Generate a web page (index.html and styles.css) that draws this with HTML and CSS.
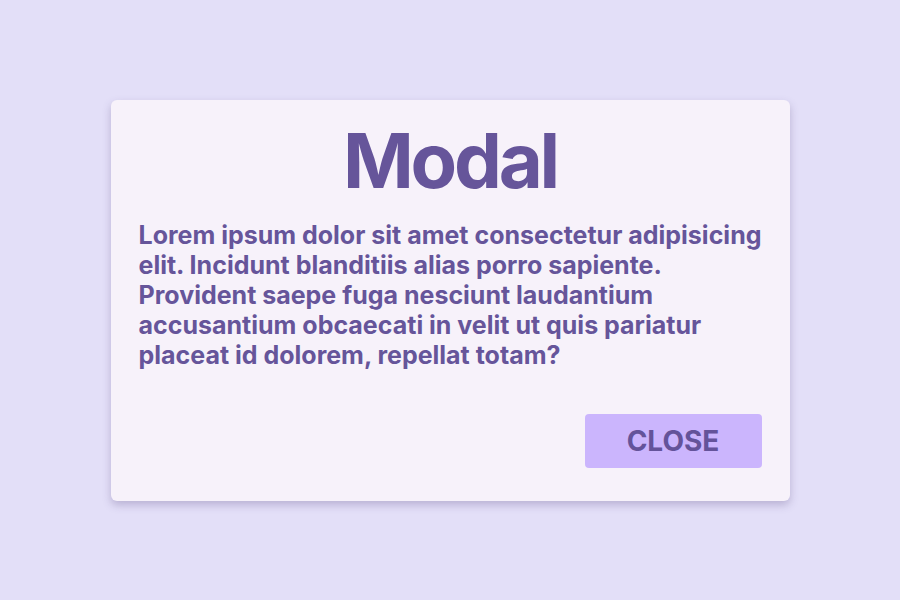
FILE: index.html
```html
<!DOCTYPE html>
<html lang="en">
<head>
<meta charset="utf-8">
<title>Modal</title>
<link rel="stylesheet" href="styles.css">
</head>
<body>
<main class="page">
  <section class="modal">
    <h1 class="modal-title">Modal</h1>
    <p class="modal-text">Lorem ipsum dolor sit amet consectetur adipisicing elit. Incidunt blanditiis alias porro sapiente. Provident saepe fuga nesciunt laudantium accusantium obcaecati in velit ut quis pariatur placeat id dolorem, repellat totam?</p>
    <div class="modal-actions">
      <button class="btn-close" type="button">CLOSE</button>
    </div>
  </section>
</main>
</body>
</html>
```
FILE: styles.css
```css
* { box-sizing: border-box; }
html, body {
  margin: 0;
  padding: 0;
  height: 100%;
}
body {
  background: #e3dff8;
  font-family: "Inter", "Liberation Sans", sans-serif;
  color: #66559a;
}
.page {
  height: 100%;
  display: flex;
  align-items: center;
  justify-content: center;
}
.modal {
  width: 679px;
  background: #f7f2fa;
  border-radius: 6px;
  padding: 14px 28px 33px;
  box-shadow: 0 4px 8px rgba(80, 60, 120, 0.28);
}
.modal-title {
  margin: 0;
  text-align: center;
  font-size: 76px;
  line-height: 92px;
  font-weight: 700;
  letter-spacing: -3.2px;
  color: #66559a;
}
.modal-text {
  margin: 14px 0 0;
  font-size: 25px;
  line-height: 30px;
  font-weight: 700;
  color: #66559a;
}
.modal-actions {
  display: flex;
  justify-content: flex-end;
  margin-top: 44px;
}
.btn-close {
  width: 177px;
  height: 54px;
  border: none;
  border-radius: 4px;
  background: #cbb5fd;
  color: #64539a;
  font-family: "Inter", "Liberation Sans", sans-serif;
  font-size: 28px;
  font-weight: 700;
  padding: 0;
  cursor: pointer;
}
```
